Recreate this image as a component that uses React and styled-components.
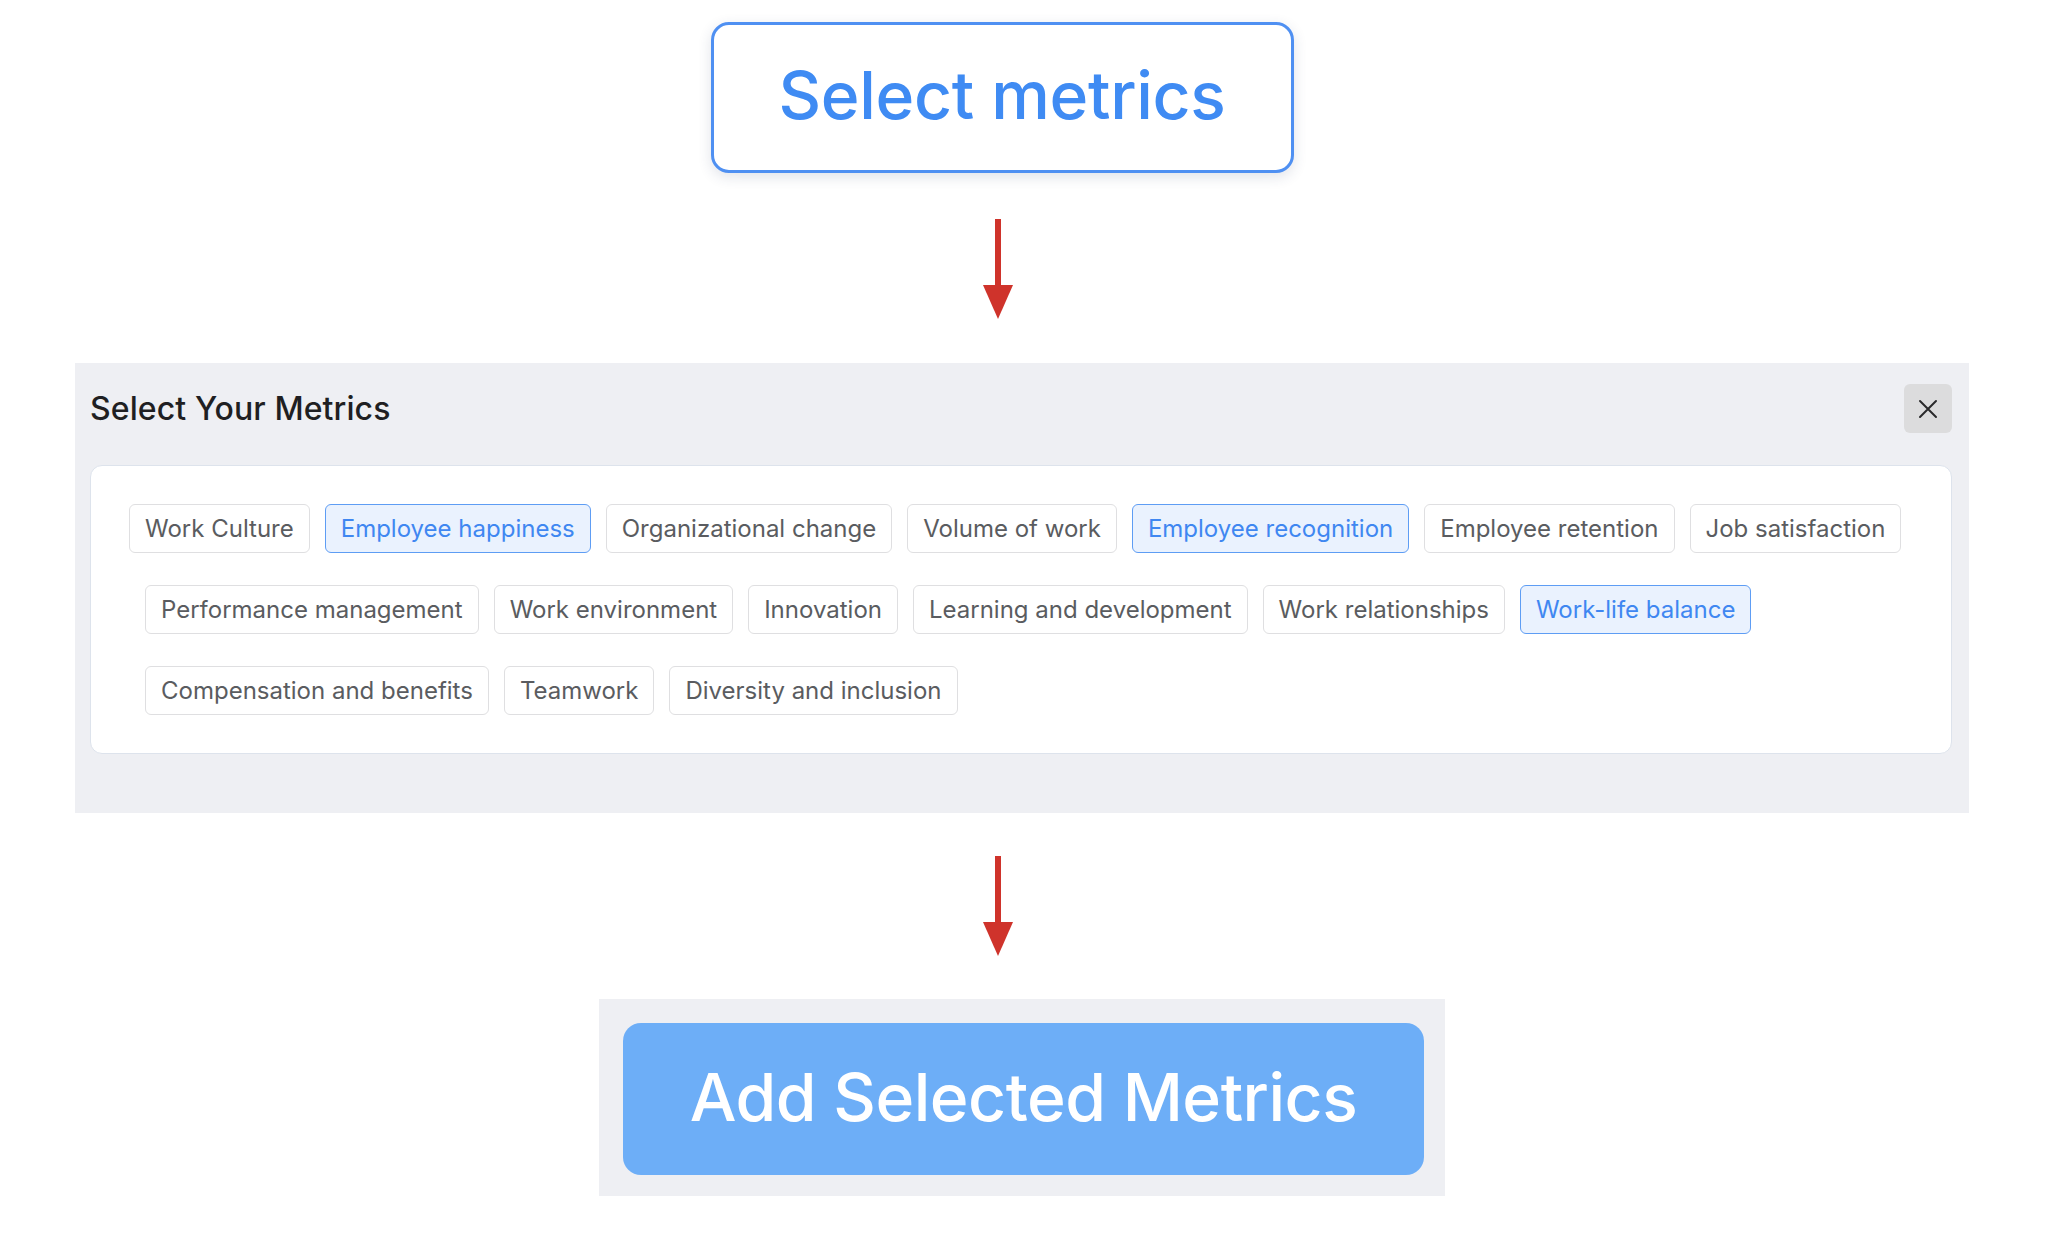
import styled, { createGlobalStyle } from "styled-components"

const GlobalStyle = createGlobalStyle`
  html, body {
    margin: 0;
    padding: 0;
    background: #ffffff;
  }
  body {
    font-family: Inter, "Noto Sans", "Liberation Sans", sans-serif;
  }
`

const Page = styled.div`
  display: flex;
  flex-direction: column;
  align-items: center;
  padding: 22px 87px 0 75px;
`

const Shifted = styled.div`
  display: flex;
  justify-content: center;
  margin-right: ${p => p.shift || 0}px;
`

const SelectButton = styled.button`
  width: 583px;
  height: 151px;
  border: 3px solid #4f90f2;
  border-radius: 18px;
  background: #ffffff;
  box-shadow: 0 4px 14px rgba(40, 60, 100, 0.14);
  color: #3f8bf3;
  font-family: Inter, "Noto Sans", sans-serif;
  font-size: 66px;
  font-weight: 500;
  letter-spacing: -0.3px;
  padding: 0 0 6px;
  cursor: pointer;
`

const ArrowWrap = styled.div`
  display: flex;
  justify-content: center;
  margin: ${p => p.top}px 0 ${p => p.bottom}px;
  margin-right: ${p => p.shift || 0}px;
`

const Panel = styled.section`
  width: 100%;
  box-sizing: border-box;
  background: #eeeff3;
  padding: 21px 17px 59px 15px;
  display: flex;
  flex-direction: column;
  gap: 32px;
`

const PanelHeader = styled.div`
  display: flex;
  align-items: center;
  justify-content: space-between;
  height: 49px;
`

const Title = styled.h2`
  margin: 0;
  font-size: 32px;
  font-weight: 500;
  color: #1f1f22;
  letter-spacing: 0.1px;
`

const CloseButton = styled.button`
  width: 48px;
  height: 49px;
  border: none;
  border-radius: 6px;
  background: #dcdcdd;
  display: flex;
  align-items: center;
  justify-content: center;
  padding: 0;
  cursor: pointer;
`

const Card = styled.div`
  background: #ffffff;
  border: 1px solid #dde3ec;
  border-radius: 12px;
  padding: 38px 0;
  display: flex;
  flex-direction: column;
  gap: 32px;
`

const ChipRow = styled.div`
  display: flex;
  gap: 15px;
  padding-left: ${p => p.indent}px;
`

const Chip = styled.button`
  height: 49px;
  box-sizing: border-box;
  padding: 0 15px;
  border-radius: 6px;
  border: 1px solid ${p => (p.selected ? "#5e9df4" : "#dfdfe1")};
  background: ${p => (p.selected ? "#eaf2fe" : "#ffffff")};
  color: ${p => (p.selected ? "#3f87f1" : "#5a5c60")};
  font-family: Inter, "Noto Sans", sans-serif;
  font-size: 24px;
  font-weight: 400;
  letter-spacing: 0;
  white-space: nowrap;
  cursor: pointer;
`

const AddBox = styled.div`
  background: #eeeff3;
  padding: 24px 21px 21px 24px;
`

const AddButton = styled.button`
  width: 801px;
  height: 152px;
  border: none;
  border-radius: 18px;
  background: #6daef7;
  color: #ffffff;
  font-family: Inter, "Noto Sans", sans-serif;
  font-size: 66px;
  font-weight: 500;
  letter-spacing: -0.5px;
  padding: 0 0 4px;
  cursor: pointer;
`

const rows = [
  {
    indent: 38,
    items: [
      ["Work Culture", false],
      ["Employee happiness", true],
      ["Organizational change", false],
      ["Volume of work", false],
      ["Employee recognition", true],
      ["Employee retention", false],
      ["Job satisfaction", false],
    ],
  },
  {
    indent: 54,
    items: [
      ["Performance management", false],
      ["Work environment", false],
      ["Innovation", false],
      ["Learning and development", false],
      ["Work relationships", false],
      ["Work-life balance", true],
    ],
  },
  {
    indent: 54,
    items: [
      ["Compensation and benefits", false],
      ["Teamwork", false],
      ["Diversity and inclusion", false],
    ],
  },
]

const DownArrow = () => (
  <svg width="32" height="100" viewBox="0 0 32 100">
    <rect x="13" y="0" width="6" height="70" fill="#cf332b" />
    <polygon points="1,66 31,66 16,100" fill="#cf332b" />
  </svg>
)

const CloseIcon = () => (
  <svg width="20" height="20" viewBox="0 0 20 20">
    <path d="M2 2 L18 18 M18 2 L2 18" stroke="#2a2a2c" strokeWidth="2" strokeLinecap="round" />
  </svg>
)

export default function App() {
  return (
    <>
      <GlobalStyle />
      <Page>
        <Shifted shift={40}>
          <SelectButton>Select metrics</SelectButton>
        </Shifted>
        <ArrowWrap top={46} bottom={44} shift={48}>
          <DownArrow />
        </ArrowWrap>
        <Panel>
          <PanelHeader>
            <Title>Select Your Metrics</Title>
            <CloseButton aria-label="Close">
              <CloseIcon />
            </CloseButton>
          </PanelHeader>
          <Card>
            {rows.map((row, i) => (
              <ChipRow key={i} indent={row.indent}>
                {row.items.map(([label, selected]) => (
                  <Chip key={label} selected={selected}>
                    {label}
                  </Chip>
                ))}
              </ChipRow>
            ))}
          </Card>
        </Panel>
        <ArrowWrap top={43} bottom={43} shift={48}>
          <DownArrow />
        </ArrowWrap>
        <AddBox>
          <AddButton>Add Selected Metrics</AddButton>
        </AddBox>
      </Page>
    </>
  )
}
